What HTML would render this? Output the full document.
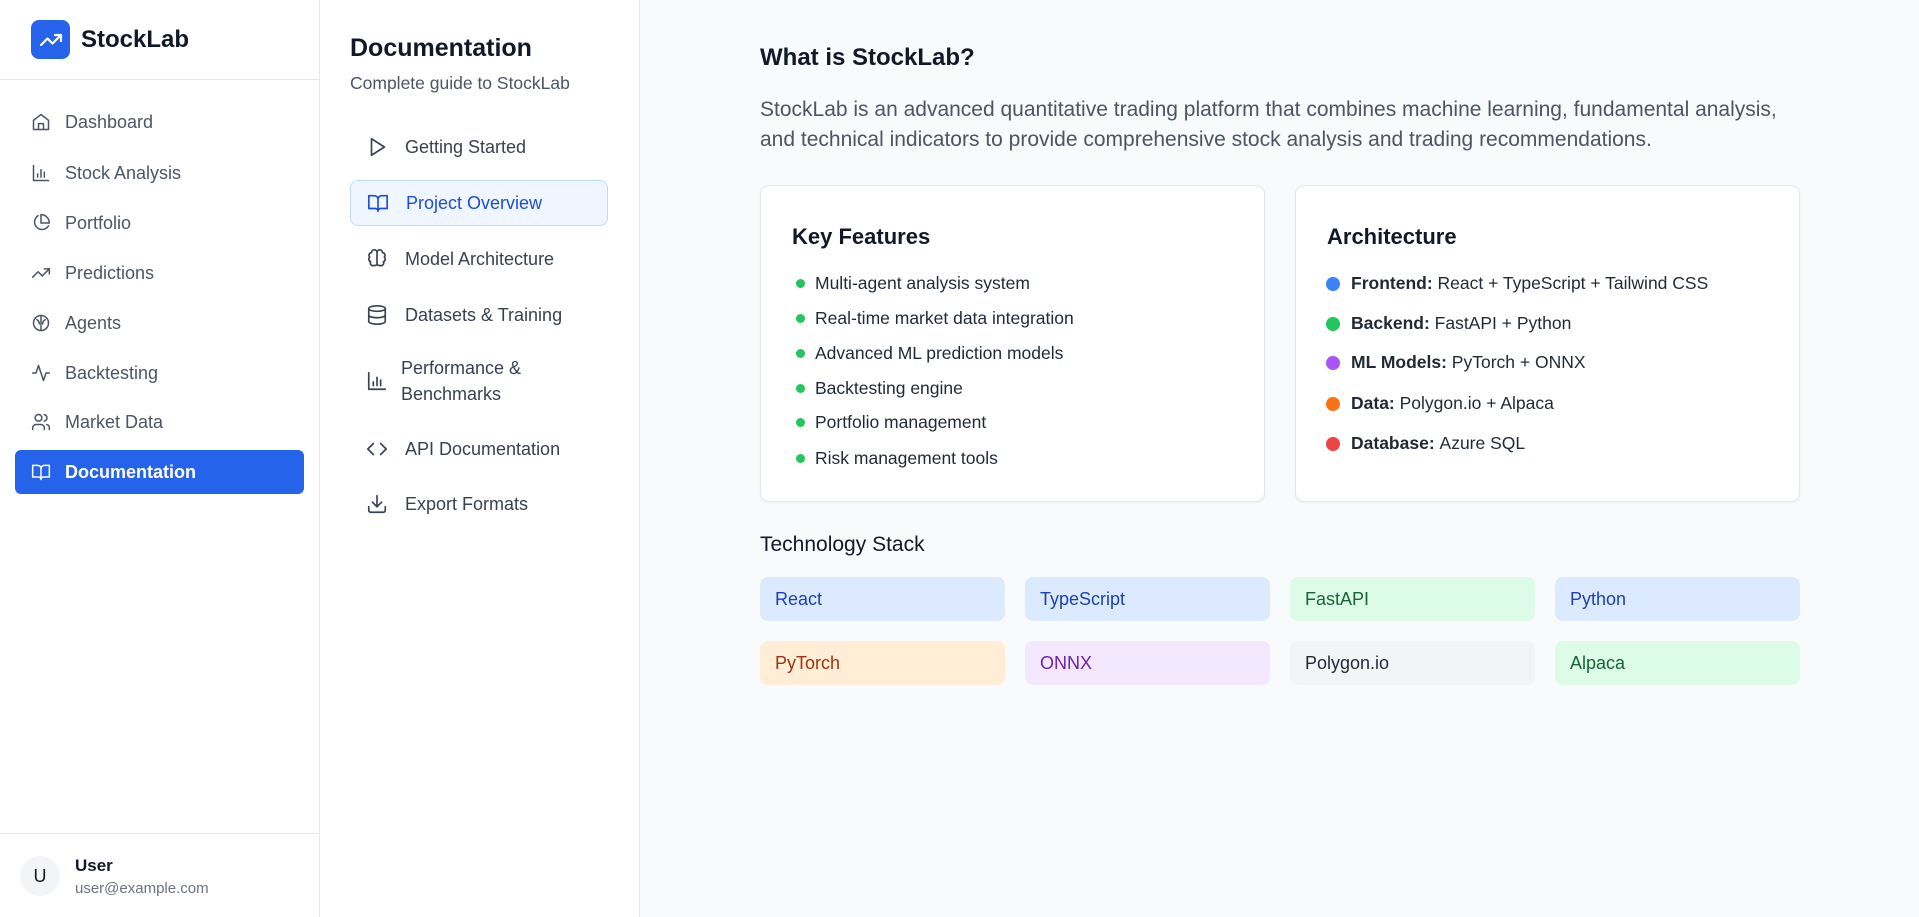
<!DOCTYPE html>
<html><head><meta charset="utf-8"><style>
*{box-sizing:border-box;margin:0;padding:0}
body{width:1919px;height:917px;overflow:hidden;font-family:"Liberation Sans",sans-serif;background:#f8fafc;position:relative;color:#111827}
.side{position:absolute;left:0;top:0;width:320px;height:917px;background:#fff;border-right:1px solid #e5e7eb}
.logo{position:absolute;left:31px;top:20px;width:39px;height:39px;border-radius:8px;background:#2563eb;display:flex;align-items:center;justify-content:center}
.brand{position:absolute;left:81px;top:26px;font-size:24px;font-weight:bold;color:#111827}
.hdr{position:absolute;left:0;top:79px;width:320px;border-top:1px solid #e5e7eb}
.nav{position:absolute;left:15px;width:289px;height:44px;border-radius:6px;display:flex;align-items:center;padding-left:16px;font-size:18px;color:#4b5563}
.nav svg{width:20px;height:20px;margin-right:14px;fill:none;stroke:currentColor;stroke-width:1.8;stroke-linecap:round;stroke-linejoin:round}
.nav.act{background:#2563eb;color:#fff;font-weight:bold}
.foot{position:absolute;left:0;top:833px;width:320px;border-top:1px solid #e5e7eb}
.av{position:absolute;left:20px;top:856px;width:40px;height:40px;border-radius:50%;background:#f3f4f6;display:flex;align-items:center;justify-content:center;font-size:18px}
.p2{position:absolute;left:320px;top:0;width:320px;height:917px;background:#fff;border-right:1px solid #e5e7eb}
.p2 h1{position:absolute;left:30px;top:34px;font-size:25px;font-weight:bold}
.p2 .sub{position:absolute;left:30px;top:73px;font-size:17.5px;color:#4b5563}
.di{position:absolute;left:30px;width:258px;height:46px;display:flex;align-items:center;padding-left:16px;font-size:18px;color:#374151;border-radius:8px}
.di svg{width:22px;height:22px;margin-right:17px;fill:none;stroke:currentColor;stroke-width:1.8;stroke-linecap:round;stroke-linejoin:round;flex:none}
.di.act{background:#eff6ff;border:1px solid #bfdbfe;color:#1d4ed8}
.main h2{position:absolute;left:760px;top:44px;font-size:24px;font-weight:bold}
.para{position:absolute;left:760px;top:95px;width:1040px;font-size:21px;line-height:30px;color:#4b5563}
.card{position:absolute;top:185px;width:505px;height:317px;background:#fff;border:1px solid #e5e7eb;border-radius:9px;box-shadow:0 1px 2px rgba(0,0,0,.05)}
.card h3{position:absolute;left:31px;top:38px;font-size:22px;font-weight:bold}
.li{position:absolute;left:35px;font-size:17.5px;display:flex;align-items:center;color:#1f2937}
.li i{width:9px;height:9px;border-radius:50%;background:#22c55e;margin-right:10px}
.ai{position:absolute;left:30px;font-size:17.5px;display:flex;align-items:center;color:#1f2937}
.ai i{width:14px;height:14px;border-radius:50%;margin-right:11px}
.ts{position:absolute;left:760px;top:533px;font-size:21px}
.pill{position:absolute;width:245px;height:44px;border-radius:8px;font-size:18px;display:flex;align-items:center;padding-left:15px}
</style></head><body>
<div class="side">
<div class="logo"><svg width="24" height="24" viewBox="0 0 24 24" fill="none" stroke="#fff" stroke-width="2.2" stroke-linecap="round" stroke-linejoin="round"><path d="M22 7l-8.5 8.5-5-5L2 17"/><path d="M16 7h6v6"/></svg></div>
<div class="brand">StockLab</div>
<div class="hdr"></div>
<div class="nav" style="top:100px"><svg viewBox="0 0 24 24"><path d="M3 10l9-7 9 7v11H3z"/><path d="M9 21v-7h6v7"/></svg>Dashboard</div>
<div class="nav" style="top:151px"><svg viewBox="0 0 24 24"><path d="M3 3v18h18"/><path d="M8 17v-4M12 17V8M16 17v-6"/></svg>Stock Analysis</div>
<div class="nav" style="top:201px"><svg viewBox="0 0 24 24"><path d="M21 15.5A9 9 0 1 1 8.5 3.2"/><path d="M22 12A10 10 0 0 0 12 2v10z"/></svg>Portfolio</div>
<div class="nav" style="top:251px"><svg viewBox="0 0 24 24"><path d="M22 7l-8.5 8.5-5-5L2 17"/><path d="M16 7h6v6"/></svg>Predictions</div>
<div class="nav" style="top:301px"><svg viewBox="0 0 24 24"><circle cx="12" cy="12" r="9"/><path d="M12 3v18M7 8c2 1 3 3 3 5M17 8c-2 1-3 3-3 5"/></svg>Agents</div>
<div class="nav" style="top:351px"><svg viewBox="0 0 24 24"><path d="M22 12h-4l-3 9L9 3l-3 9H2"/></svg>Backtesting</div>
<div class="nav" style="top:400px"><svg viewBox="0 0 24 24"><circle cx="9" cy="7" r="4"/><path d="M2 21v-2a4 4 0 0 1 4-4h6a4 4 0 0 1 4 4v2M16 3.1a4 4 0 0 1 0 7.8M22 21v-2a4 4 0 0 0-3-3.9"/></svg>Market Data</div>
<div class="nav act" style="top:450px"><svg viewBox="0 0 24 24"><path d="M2 4h6a4 4 0 0 1 4 4v13a3 3 0 0 0-3-3H2zM22 4h-6a4 4 0 0 0-4 4v13a3 3 0 0 1 3-3h7z"/></svg>Documentation</div>
<div class="foot"></div>
<div class="av">U</div>
<div style="position:absolute;left:75px;top:856px;font-size:17px;font-weight:bold">User</div>
<div style="position:absolute;left:75px;top:880px;font-size:15px;color:#6b7280">user@example.com</div>
</div>
<div class="p2">
<h1>Documentation</h1>
<div class="sub">Complete guide to StockLab</div>
<div class="di" style="top:124px"><svg viewBox="0 0 24 24"><path d="M6 3l14 9-14 9z"/></svg>Getting Started</div>
<div class="di act" style="top:180px"><svg viewBox="0 0 24 24"><path d="M2 4h6a4 4 0 0 1 4 4v13a3 3 0 0 0-3-3H2zM22 4h-6a4 4 0 0 0-4 4v13a3 3 0 0 1 3-3h7z"/></svg>Project Overview</div>
<div class="di" style="top:236px"><svg viewBox="0 0 24 24"><path d="M12 5a3 3 0 1 0-6 0 3 3 0 0 0-2 5 3 3 0 0 0 1 5 3 3 0 0 0 4 4 3 3 0 0 0 3-1zM12 5a3 3 0 1 1 6 0 3 3 0 0 1 2 5 3 3 0 0 1-1 5 3 3 0 0 1-4 4 3 3 0 0 1-3-1zM12 5v13"/></svg>Model Architecture</div>
<div class="di" style="top:292px"><svg viewBox="0 0 24 24"><ellipse cx="12" cy="5" rx="9" ry="3"/><path d="M3 5v14c0 1.7 4 3 9 3s9-1.3 9-3V5M3 12c0 1.7 4 3 9 3s9-1.3 9-3"/></svg>Datasets &amp; Training</div>
<div class="di" style="top:355px;height:52px;line-height:26px;padding-left:16px"><svg viewBox="0 0 24 24" style="margin-right:13px"><path d="M3 3v18h18"/><path d="M8 17v-4M12 17V8M16 17v-6"/></svg>Performance &amp;<br>Benchmarks</div>
<div class="di" style="top:426px"><svg viewBox="0 0 24 24"><path d="M16 18l6-6-6-6M8 6l-6 6 6 6"/></svg>API Documentation</div>
<div class="di" style="top:481px"><svg viewBox="0 0 24 24"><path d="M21 15v4a2 2 0 0 1-2 2H5a2 2 0 0 1-2-2v-4M7 10l5 5 5-5M12 15V3"/></svg>Export Formats</div>
</div>
<div class="main">
<h2>What is StockLab?</h2>
<div class="para">StockLab is an advanced quantitative trading platform that combines machine learning, fundamental analysis, and technical indicators to provide comprehensive stock analysis and trading recommendations.</div>
<div class="card" style="left:760px"><h3>Key Features</h3>
<div class="li" style="top:87px"><i></i>Multi-agent analysis system</div>
<div class="li" style="top:122px"><i></i>Real-time market data integration</div>
<div class="li" style="top:157px"><i></i>Advanced ML prediction models</div>
<div class="li" style="top:192px"><i></i>Backtesting engine</div>
<div class="li" style="top:226px"><i></i>Portfolio management</div>
<div class="li" style="top:262px"><i></i>Risk management tools</div>
</div>
<div class="card" style="left:1295px"><h3>Architecture</h3>
<div class="ai" style="top:87px"><i style="background:#3b82f6"></i><b>Frontend:</b>&nbsp;React + TypeScript + Tailwind CSS</div>
<div class="ai" style="top:127px"><i style="background:#22c55e"></i><b>Backend:</b>&nbsp;FastAPI + Python</div>
<div class="ai" style="top:166px"><i style="background:#a855f7"></i><b>ML Models:</b>&nbsp;PyTorch + ONNX</div>
<div class="ai" style="top:207px"><i style="background:#f97316"></i><b>Data:</b>&nbsp;Polygon.io + Alpaca</div>
<div class="ai" style="top:247px"><i style="background:#ef4444"></i><b>Database:</b>&nbsp;Azure SQL</div>
</div>
<div class="ts">Technology Stack</div>
<div class="pill" style="left:760px;top:577px;background:#dbeafe;color:#1e40af">React</div>
<div class="pill" style="left:1025px;top:577px;background:#dbeafe;color:#1e40af">TypeScript</div>
<div class="pill" style="left:1290px;top:577px;background:#dcfce7;color:#166534">FastAPI</div>
<div class="pill" style="left:1555px;top:577px;background:#dbeafe;color:#1e40af">Python</div>
<div class="pill" style="left:760px;top:641px;background:#ffedd5;color:#9a3412">PyTorch</div>
<div class="pill" style="left:1025px;top:641px;background:#f3e8ff;color:#6b21a8">ONNX</div>
<div class="pill" style="left:1290px;top:641px;background:#f3f4f6;color:#1f2937">Polygon.io</div>
<div class="pill" style="left:1555px;top:641px;background:#dcfce7;color:#166534">Alpaca</div>
</div>
</body></html>
